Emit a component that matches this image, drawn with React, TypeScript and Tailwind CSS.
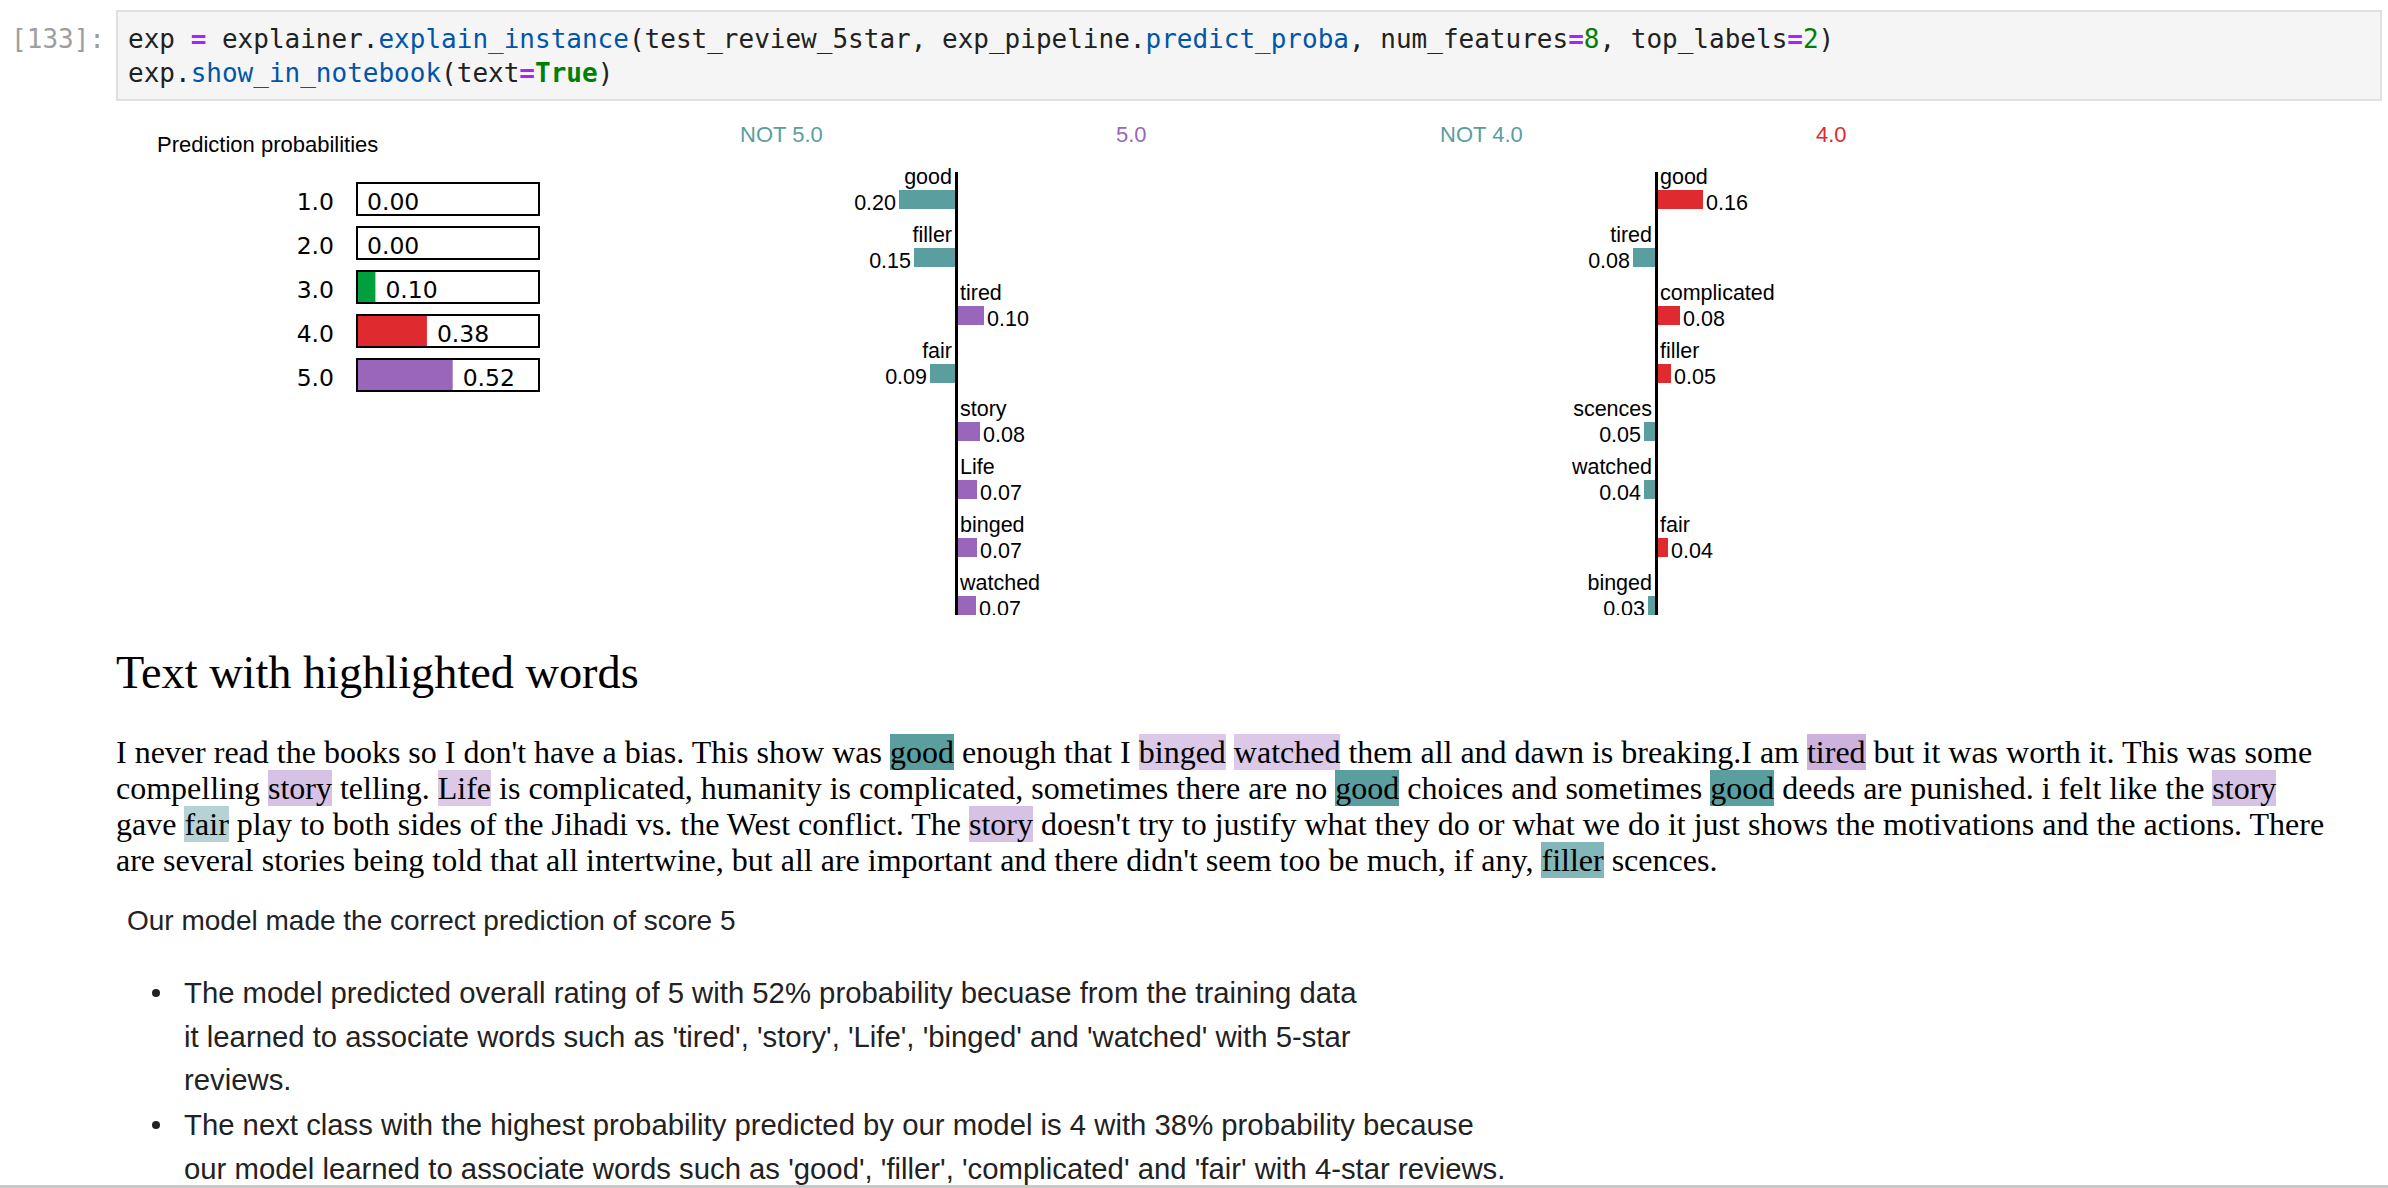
const teal = "#5a9ea0"
const purple = "#9966bb"
const red = "#df2a30"
const green = "#00a03c"

const probs = [
  { label: "1.0", p: 0, color: green },
  { label: "2.0", p: 0, color: green },
  { label: "3.0", p: 0.1, color: green },
  { label: "4.0", p: 0.38, color: red },
  { label: "5.0", p: 0.52, color: purple },
]

type Feat = { word: string; value: string; w: number; right: boolean }

const feats5: Feat[] = [
  { word: "good", value: "0.20", w: 56, right: false },
  { word: "filler", value: "0.15", w: 41, right: false },
  { word: "tired", value: "0.10", w: 26, right: true },
  { word: "fair", value: "0.09", w: 25, right: false },
  { word: "story", value: "0.08", w: 22, right: true },
  { word: "Life", value: "0.07", w: 19, right: true },
  { word: "binged", value: "0.07", w: 19, right: true },
  { word: "watched", value: "0.07", w: 18, right: true },
]

const feats4: Feat[] = [
  { word: "good", value: "0.16", w: 45, right: true },
  { word: "tired", value: "0.08", w: 22, right: false },
  { word: "complicated", value: "0.08", w: 22, right: true },
  { word: "filler", value: "0.05", w: 13, right: true },
  { word: "scences", value: "0.05", w: 11, right: false },
  { word: "watched", value: "0.04", w: 11, right: false },
  { word: "fair", value: "0.04", w: 10, right: true },
  { word: "binged", value: "0.03", w: 7, right: false },
]

function PredictProba() {
  return (
    <svg width={584} height={300} className="shrink-0 font-['Liberation_Sans',Arial,sans-serif]">
      <text x={41} y={42} fontSize={22} fill="#000">
        Prediction probabilities
      </text>
      {probs.map((row, i) => (
        <g key={row.label}>
          <text
            x={218}
            y={100 + 44 * i}
            fontSize={23.5}
            textAnchor="end"
            className="font-['DejaVu_Sans',Verdana,sans-serif]"
          >
            {row.label}
          </text>
          {row.p > 0 && <rect x={241} y={73 + 44 * i} width={row.p * 184} height={32} fill={row.color} />}
          <rect x={241} y={73 + 44 * i} width={182} height={32} fill="none" stroke="#000" strokeWidth={2} />
          <text
            x={251 + row.p * 184}
            y={100 + 44 * i}
            fontSize={23.5}
            className="font-['DejaVu_Sans',Verdana,sans-serif]"
          >
            {row.p.toFixed(2)}
          </text>
        </g>
      ))}
    </svg>
  )
}

function ExplanationChart({ label, color, feats }: { label: string; color: string; feats: Feat[] }) {
  return (
    <svg width={700} height={505} className="shrink-0 font-['Liberation_Sans',Arial,sans-serif]">
      <text x={40} y={32} fontSize={22} fill={teal}>
        NOT {label}
      </text>
      <text x={416} y={32} fontSize={22} fill={color}>
        {label}
      </text>
      {feats.map((f, i) => {
        const top = 80 + 58 * i
        return (
          <g key={f.word}>
            <rect x={f.right ? 258 : 255 - f.w} y={top} width={f.w} height={19} fill={f.right ? color : teal} />
            <text x={f.right ? 260 : 252} y={top - 6} fontSize={21.5} textAnchor={f.right ? "start" : "end"}>
              {f.word}
            </text>
            <text
              x={f.right ? 258 + f.w + 3 : 255 - f.w - 3}
              y={top + 20}
              fontSize={21.5}
              textAnchor={f.right ? "start" : "end"}
            >
              {f.value}
            </text>
          </g>
        )
      })}
      <rect x={255} y={62} width={3} height={443} fill="#000" />
    </svg>
  )
}

function H({ c, children }: { c: string; children: string }) {
  return (
    <span className="py-[0.3px]" style={{ backgroundColor: c }}>
      {children}
    </span>
  )
}

const op = "text-[#aa22ff] font-bold"
const prop = "text-[#0055aa]"
const num = "text-[#008000]"

function Dot() {
  return (
    <span className="w-[68px] shrink-0">
      <span className="ml-[36px] mt-[18px] block h-[8px] w-[8px] rounded-full bg-[#222]" />
    </span>
  )
}

export default function App() {
  return (
    <div className="flex h-[1188px] w-[2388px] flex-col overflow-hidden bg-white text-black">
      <div className="min-h-0 flex-1 overflow-hidden pt-[10px]">
        {/* input cell */}
        <div className="flex items-baseline">
          <div className="w-[116px] shrink-0 pr-[11px] text-right font-['DejaVu_Sans_Mono',monospace] text-[26px] leading-[34px] text-[#9e9e9e]">
            [133]:
          </div>
          <div className="mr-[6px] flex-1 whitespace-pre border-2 border-[#e0e0e0] bg-[#f5f5f5] pb-[9px] pl-[10px] pt-[10px] font-['DejaVu_Sans_Mono',monospace] text-[26px] leading-[34px] text-[#212121]">
            <div>
              exp <span className={op}>=</span> explainer.<span className={prop}>explain_instance</span>
              (test_review_5star, exp_pipeline.<span className={prop}>predict_proba</span>, num_features
              <span className={op}>=</span>
              <span className={num}>8</span>, top_labels<span className={op}>=</span>
              <span className={num}>2</span>)
            </div>
            <div>
              exp.<span className={prop}>show_in_notebook</span>(text<span className={op}>=</span>
              <span className={`${num} font-bold`}>True</span>)
            </div>
          </div>
        </div>

        {/* lime output */}
        <div className="mt-[9px] flex h-[505px] pl-[116px]">
          <PredictProba />
          <ExplanationChart label="5.0" color={purple} feats={feats5} />
          <ExplanationChart label="4.0" color={red} feats={feats4} />
        </div>

        <h3 className="mt-[32px] pl-[116px] font-['Liberation_Serif','Times_New_Roman',serif] text-[46.3px] font-normal leading-[52px]">
          Text with highlighted words
        </h3>
        <p className="ml-[116px] mt-[35px] w-[2270px] font-['Liberation_Serif','Times_New_Roman',serif] text-[32px] leading-[36px]">
          I never read the books so I don't have a bias. This show was <H c="#5a9ea0">good</H> enough that I{" "}
          <H c="#dbc9e7">binged</H> <H c="#dbc9e7">watched</H> them all and dawn is breaking.I am{" "}
          <H c="#ccb2dd">tired</H> but it was worth it. This was some
          <br />
          compelling <H c="#d6c2e4">story</H> telling. <H c="#dbc9e7">Life</H> is complicated, humanity is
          complicated, sometimes there are no <H c="#5a9ea0">good</H> choices and sometimes{" "}
          <H c="#5a9ea0">good</H> deeds are punished. i felt like the <H c="#d6c2e4">story</H>
          <br />
          gave <H c="#b5d3d4">fair</H> play to both sides of the Jihadi vs. the West conflict. The{" "}
          <H c="#d6c2e4">story</H> doesn't try to justify what they do or what we do it just shows the motivations
          and the actions. There
          <br />
          are several stories being told that all intertwine, but all are important and there didn't seem too be
          much, if any, <H c="#83b6b8">filler</H> scences.
        </p>

        {/* markdown cell */}
        <div className="font-['Liberation_Sans',Arial,sans-serif] leading-[43.5px] text-[#222]">
          <p className="mt-[21px] pl-[127px] text-[28px]">Our model made the correct prediction of score 5</p>
          <ul className="mt-[28.6px] pl-[116px] text-[29.3px]">
            <li className="flex">
              <Dot />
              <span>
                The model predicted overall rating of 5 with 52% probability becuase from the training data
                <br />
                it learned to associate words such as 'tired', 'story', 'Life', 'binged' and 'watched' with 5-star
                <br />
                reviews.
              </span>
            </li>
            <li className="mt-[1.5px] flex">
              <Dot />
              <span>
                The next class with the highest probability predicted by our model is 4 with 38% probability because
                <br />
                our model learned to associate words such as 'good', 'filler', 'complicated' and 'fair' with 4-star
                reviews.
              </span>
            </li>
          </ul>
        </div>
      </div>
      <div className="h-[3px] shrink-0 bg-[#c9c9c9]" />
    </div>
  )
}
